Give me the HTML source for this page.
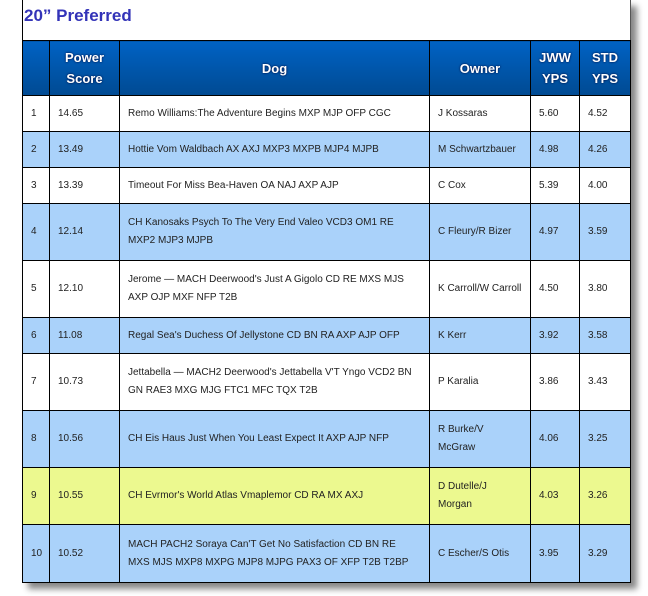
<!DOCTYPE html>
<html><head><style>
body{margin:0;width:648px;height:596px;background:#fff;position:relative;overflow:hidden;font-family:"Liberation Sans",Arial,sans-serif;}
.frame{position:absolute;left:22px;top:0;width:607px;height:583px;border-left:1px solid #000;border-right:1px solid #555;box-shadow:6px 6px 6px #888;background:#fff;}
h1{position:absolute;left:24px;top:6px;margin:0;font-size:17px;font-weight:bold;color:#3333b8;}
table{position:absolute;left:22px;top:40px;border-collapse:collapse;width:608px;table-layout:fixed;}
td,th{border:1px solid #000;font-size:10px;color:#222;padding:0 0 0 8px;text-align:left;line-height:18px;white-space:nowrap;overflow:hidden;}
th{background:linear-gradient(#0062c4,#004a92);color:#fff;font-size:13px;line-height:21px;text-align:center;padding:0;height:54px;text-shadow:0 0 2px #003;}
tr.b td{background:#aad2fa;}
tr.y td{background:#ecf98f;}
</style></head><body>
<div class="frame"></div>
<h1>20” Preferred</h1>
<table>
<colgroup><col style="width:27px"><col style="width:70px"><col style="width:310px"><col style="width:101px"><col style="width:49px"><col style="width:51px"></colgroup>
<tr><th></th><th>Power<br>Score</th><th>Dog</th><th>Owner</th><th>JWW<br>YPS</th><th>STD<br>YPS</th></tr>
<tr style="height:36px"><td>1</td><td>14.65</td><td>Remo Williams:The Adventure Begins MXP MJP OFP CGC</td><td>J Kossaras</td><td>5.60</td><td>4.52</td></tr>
<tr class="b" style="height:36px"><td>2</td><td>13.49</td><td>Hottie Vom Waldbach AX AXJ MXP3 MXPB MJP4 MJPB</td><td>M Schwartzbauer</td><td>4.98</td><td>4.26</td></tr>
<tr style="height:36px"><td>3</td><td>13.39</td><td>Timeout For Miss Bea-Haven OA NAJ AXP AJP</td><td>C Cox</td><td>5.39</td><td>4.00</td></tr>
<tr class="b" style="height:57px"><td>4</td><td>12.14</td><td>CH Kanosaks Psych To The Very End Valeo VCD3 OM1 RE<br>MXP2 MJP3 MJPB</td><td>C Fleury/R Bizer</td><td>4.97</td><td>3.59</td></tr>
<tr style="height:57px"><td>5</td><td>12.10</td><td>Jerome — MACH Deerwood's Just A Gigolo CD RE MXS MJS<br>AXP OJP MXF NFP T2B</td><td>K Carroll/W Carroll</td><td>4.50</td><td>3.80</td></tr>
<tr class="b" style="height:36px"><td>6</td><td>11.08</td><td>Regal Sea's Duchess Of Jellystone CD BN RA AXP AJP OFP</td><td>K Kerr</td><td>3.92</td><td>3.58</td></tr>
<tr style="height:57px"><td>7</td><td>10.73</td><td>Jettabella — MACH2 Deerwood's Jettabella V'T Yngo VCD2 BN<br>GN RAE3 MXG MJG FTC1 MFC TQX T2B</td><td>P Karalia</td><td>3.86</td><td>3.43</td></tr>
<tr class="b" style="height:57px"><td>8</td><td>10.56</td><td>CH Eis Haus Just When You Least Expect It AXP AJP NFP</td><td>R Burke/V<br>McGraw</td><td>4.06</td><td>3.25</td></tr>
<tr class="y" style="height:57px"><td>9</td><td>10.55</td><td>CH Evrmor's World Atlas Vmaplemor CD RA MX AXJ</td><td>D Dutelle/J<br>Morgan</td><td>4.03</td><td>3.26</td></tr>
<tr class="b" style="height:58px"><td>10</td><td>10.52</td><td>MACH PACH2 Soraya Can'T Get No Satisfaction CD BN RE<br>MXS MJS MXP8 MXPG MJP8 MJPG PAX3 OF XFP T2B T2BP</td><td>C Escher/S Otis</td><td>3.95</td><td>3.29</td></tr>
</table>
</body></html>
